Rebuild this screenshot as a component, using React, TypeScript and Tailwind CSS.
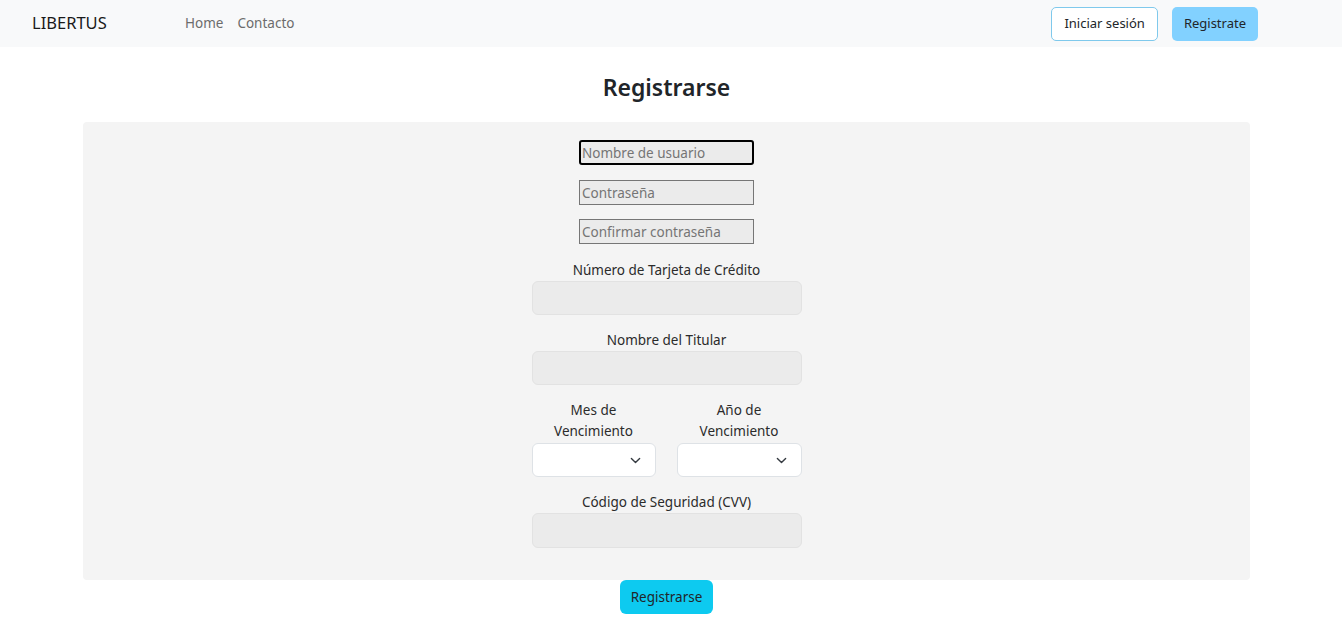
import React from "react";

function Chevron() {
  return (
    <svg width="11" height="11" viewBox="0 0 16 16" fill="none" stroke="#343a40" strokeWidth="2" strokeLinecap="round" strokeLinejoin="round">
      <path d="M2 5l6 6 6-6" />
    </svg>
  );
}

export default function App() {
  const font = { fontFamily: '"Noto Sans", "Segoe UI", sans-serif' };
  return (
    <div className="w-[1342px] min-h-[620px] bg-white text-[#212529]" style={font}>
      <nav className="h-[47px] bg-[#f8f9fa] flex items-center">
        <div className="w-[1333px] flex items-center pl-[32px] pr-[75px]">
          <span className="text-[16.5px] text-[#1a1a1a] w-[153px]">LIBERTUS</span>
          <div className="flex gap-[14px] text-[13.5px] text-[#6c6c6c]">
            <span>Home</span>
            <span>Contacto</span>
          </div>
          <div className="ml-auto flex gap-[14px]">
            <button className="h-[34px] px-[12px] border border-[#7fc9ec] rounded-[5px] bg-white text-[13px] text-[#212529]">Iniciar sesión</button>
            <button className="h-[34px] px-[12px] rounded-[5px] bg-[#82d1ff] text-[13px] text-[#212529]">Registrate</button>
          </div>
        </div>
      </nav>
      <main className="w-[1333px] flex flex-col items-center">
        <h2 className="mt-[25px] text-[23px] font-semibold leading-[30px] text-[#212529]">Registrarse</h2>
        <div className="mt-[20px] w-[1167px] bg-[#f4f4f4] rounded-[4px] flex flex-col items-center pt-[18px] pb-[32px]">
          <input placeholder="Nombre de usuario" className="w-[175px] h-[25px] bg-[#ebebeb] border-2 border-black rounded-[3px] px-[1px] text-[13.5px] placeholder:text-[#757575] outline-none" />
          <input placeholder="Contraseña" className="mt-[15px] w-[175px] h-[25px] bg-[#ebebeb] border border-[#767676] px-[2px] text-[13.5px] placeholder:text-[#757575] outline-none" />
          <input placeholder="Confirmar contraseña" className="mt-[14px] w-[175px] h-[25px] bg-[#ebebeb] border border-[#767676] px-[2px] text-[13.5px] placeholder:text-[#757575] outline-none" />

          <div className="mt-[16px] w-[270px] flex flex-col items-center">
            <label className="text-[13.5px] leading-[21px] text-[#2b2b2b]">Número de Tarjeta de Crédito</label>
            <div className="mt-[0px] w-[270px] h-[34px] bg-[#ebebeb] border border-[#e2e2e2] rounded-[6px]" />
          </div>
          <div className="mt-[15px] w-[270px] flex flex-col items-center">
            <label className="text-[13.5px] leading-[21px] text-[#2b2b2b]">Nombre del Titular</label>
            <div className="mt-[0px] w-[270px] h-[34px] bg-[#ebebeb] border border-[#e2e2e2] rounded-[6px]" />
          </div>
          <div className="mt-[15px] w-[270px] flex justify-between">
            <div className="w-[124px] flex flex-col items-center">
              <label className="text-[13.5px] leading-[21px] text-[#2b2b2b] text-center">Mes de<br />Vencimiento</label>
              <div className="mt-[1px] w-[124px] h-[34px] bg-white border border-[#dee2e6] rounded-[6px] flex items-center justify-end pr-[14px]"><Chevron /></div>
            </div>
            <div className="w-[125px] flex flex-col items-center">
              <label className="text-[13.5px] leading-[21px] text-[#2b2b2b] text-center">Año de<br />Vencimiento</label>
              <div className="mt-[1px] w-[125px] h-[34px] bg-white border border-[#dee2e6] rounded-[6px] flex items-center justify-end pr-[14px]"><Chevron /></div>
            </div>
          </div>
          <div className="mt-[15px] w-[270px] flex flex-col items-center">
            <label className="text-[13.5px] leading-[21px] text-[#2b2b2b]">Código de Seguridad (CVV)</label>
            <div className="mt-[0px] w-[270px] h-[35px] bg-[#ebebeb] border border-[#e2e2e2] rounded-[6px]" />
          </div>
        </div>
        <button className="w-[93px] h-[34px] rounded-[6px] bg-[#0dcaf0] text-[13.5px] text-[#212529]">Registrarse</button>
      </main>
    </div>
  );
}
